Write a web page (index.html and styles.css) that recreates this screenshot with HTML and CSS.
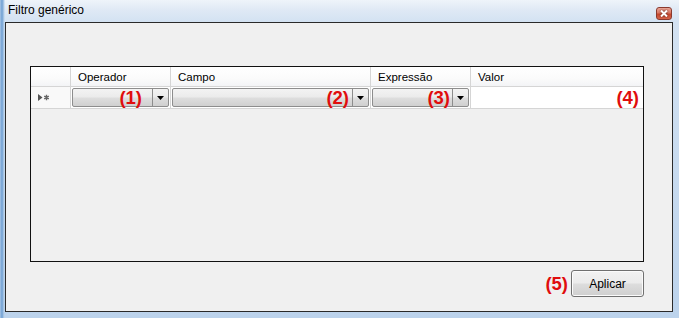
FILE: index.html
```html
<!DOCTYPE html>
<html lang="pt">
<head>
<meta charset="utf-8">
<title>Filtro genérico</title>
<link rel="stylesheet" href="styles.css">
</head>
<body>
<div class="window">
  <div class="titlebar">
    <span class="title">Filtro genérico</span>
    <div class="close">
      <svg width="8" height="7" viewBox="0 0 8 7"><path d="M1 0.5 L7 6.5 M7 0.5 L1 6.5" stroke="#fff" stroke-width="2"/></svg>
    </div>
  </div>
  <div class="client">
    <div class="grid">
      <div class="row hdr-row">
        <div class="cell rh"></div>
        <div class="cell c-op">Operador</div>
        <div class="cell c-campo">Campo</div>
        <div class="cell c-expr">Expressão</div>
        <div class="cell c-val">Valor</div>
      </div>
      <div class="row data-row">
        <div class="cell rh">
          <svg width="12" height="7" viewBox="0 0 12 7"><path d="M0 0 L4.5 3.5 L0 7 Z" fill="#555"/><path d="M8.5 0.8 V6.2 M6.2 2.2 L10.8 4.8 M6.2 4.8 L10.8 2.2" stroke="#666" stroke-width="1.4"/></svg>
        </div>
        <div class="cell c-op">
          <div class="combo"><span class="mark m1">(1)</span><span class="dd"><svg width="7" height="4" viewBox="0 0 7 4"><path d="M0 0 H7 L3.5 4 Z" fill="#000"/></svg></span></div>
        </div>
        <div class="cell c-campo">
          <div class="combo"><span class="mark m2">(2)</span><span class="dd"><svg width="7" height="4" viewBox="0 0 7 4"><path d="M0 0 H7 L3.5 4 Z" fill="#000"/></svg></span></div>
        </div>
        <div class="cell c-expr">
          <div class="combo"><span class="mark m3">(3)</span><span class="dd"><svg width="7" height="4" viewBox="0 0 7 4"><path d="M0 0 H7 L3.5 4 Z" fill="#000"/></svg></span></div>
        </div>
        <div class="cell c-val edit"><span class="mark">(4)</span></div>
      </div>
    </div>
    <div class="footer">
      <span class="mark m5">(5)</span>
      <button class="btn">Aplicar</button>
    </div>
  </div>
</div>
</body>
</html>
```
FILE: styles.css
```css
* { box-sizing: border-box; }
html, body { margin: 0; padding: 0; }
body {
  width: 679px;
  height: 318px;
  overflow: hidden;
  font-family: "Liberation Sans", Arial, sans-serif;
  font-size: 12px;
  color: #000;
}
.window {
  width: 679px;
  height: 318px;
  display: flex;
  flex-direction: column;
  padding: 0 6px 6px 5px;
  background:
    linear-gradient(90deg, #a9c6e6 0px, #6f9fd2 2px, #b7d0ea 4px, rgba(0,0,0,0) 5px),
    linear-gradient(180deg, #eef4fa 0px, #dfe9f5 10px, #d3e2f2 22px, #bcd3ec 100%);
}
.titlebar {
  height: 22px;
  margin: 0 -6px 0 -5px;
  padding: 0 7px 0 8px;
  display: flex;
  justify-content: space-between;
  align-items: flex-start;
}
.title {
  margin-top: 3px;
  line-height: 15px;
  color: #000;
}
.close {
  margin-top: 7px;
  width: 16px;
  height: 13px;
  border: 1px solid #8a3a2e;
  border-radius: 3px;
  background: linear-gradient(180deg, #eca99a 0%, #d97763 45%, #c4472c 55%, #d8664c 100%);
  display: flex;
  align-items: center;
  justify-content: center;
}
.close svg { filter: drop-shadow(0 0 1px #5a1d12); }
.client {
  flex: 1;
  border: 1px solid #2a2a2a;
  background: #f0f0f0;
  padding: 43px 28px 0 24px;
  display: flex;
  flex-direction: column;
}
.grid {
  height: 196px;
  border: 1px solid #111;
  background: #f0f0f0;
}
.row { display: flex; }
.hdr-row {
  height: 20px;
  background: linear-gradient(180deg, #ffffff 0%, #fbfbfb 60%, #f3f4f6 100%);
  border-bottom: 1px solid #d5d5d5;
}
.data-row {
  height: 22px;
  border-bottom: 1px solid #d5d5d5;
  background: #fff;
}
.cell {
  border-right: 1px solid #d5d5d5;
  display: flex;
  align-items: center;
}
.hdr-row .cell { padding-left: 7px; line-height: 14px; font-size: 11.5px; }
.rh { width: 40px; }
.data-row .rh { background: #f9f9f9; padding-left: 7px; }
.c-op { width: 100px; }
.c-campo { width: 200px; }
.c-expr { width: 100px; }
.c-val { flex: 1; border-right: none; }
.data-row .cell:not(.rh):not(.edit) { padding: 1px; }
.combo {
  width: 100%;
  height: 100%;
  border: 1px solid #8d8d8d;
  border-radius: 2px;
  background: linear-gradient(180deg, #f3f3f3 0%, #ebebeb 48%, #dedede 52%, #d0d0d0 100%);
  display: flex;
  justify-content: flex-end;
  align-items: center;
}
.dd {
  width: 16px;
  height: 100%;
  border-left: 1px solid #8d8d8d;
  display: flex;
  align-items: center;
  justify-content: center;
  padding-top: 1px;
}
.mark {
  color: #e00d0d;
  font-weight: bold;
  font-size: 18.5px;
  line-height: 18px;
}
.m1 { margin-right: 10px; }
.m2 { margin-right: 3px; }
.m3 { margin-right: 2px; }
.edit {
  background: #fff;
  justify-content: flex-end;
  padding-right: 4px;
}
.footer {
  margin-top: 8px;
  display: flex;
  justify-content: flex-end;
  align-items: center;
  gap: 3px;
}
.btn {
  width: 73px;
  height: 27px;
  border: 1px solid #707070;
  border-radius: 3px;
  background: linear-gradient(180deg, #f2f2f2 0%, #ebebeb 48%, #dddddd 52%, #cfcfcf 100%);
  box-shadow: inset 0 0 0 1px #fbfbfb;
  font-family: "Liberation Sans", Arial, sans-serif;
  font-size: 12px;
  color: #000;
  padding: 0;
}
```
